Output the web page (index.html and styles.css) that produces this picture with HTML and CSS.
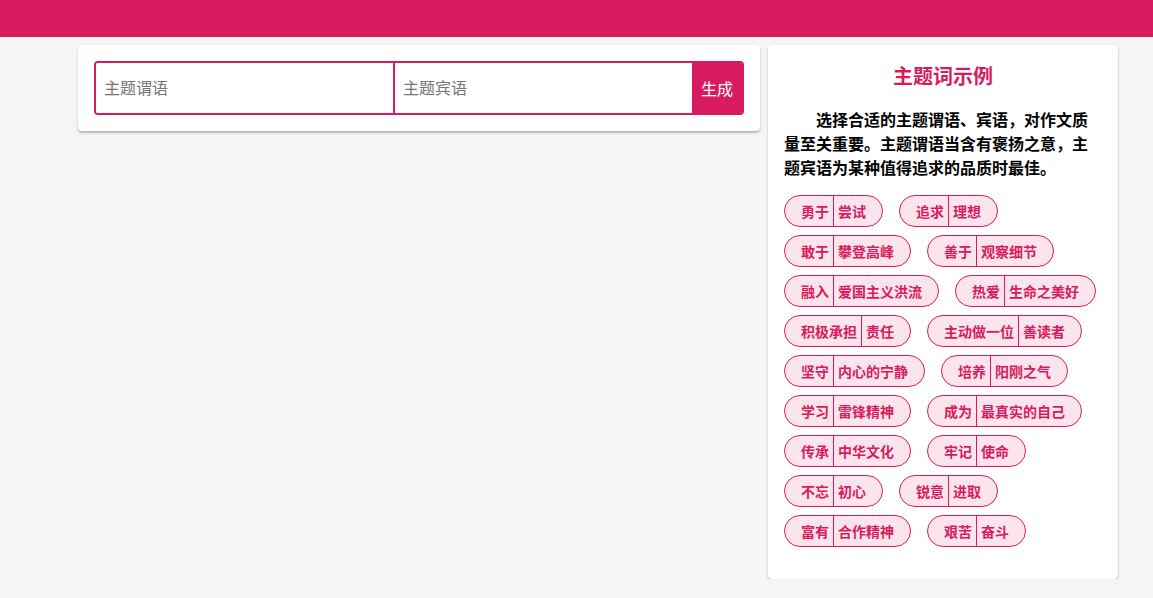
FILE: index.html
```html
<!DOCTYPE html>
<html lang="zh-CN">
<head>
<meta charset="UTF-8" />
<meta name="viewport" content="width=device-width, initial-scale=1.0" />
<title>主题词生成</title>
<link rel="stylesheet" href="styles.css">
</head>
<body>
<header class="topbar"></header>

<div class="page">
  <div class="card main-card">
    <form class="input-group" onsubmit="return false;">
      <input type="text" class="word-input" placeholder="主题谓语" />
      <input type="text" class="word-input" placeholder="主题宾语" />
      <button type="button" class="gen-btn">生成</button>
    </form>
  </div>

  <div class="card side-card">
    <h3 class="side-title">主题词示例</h3>
    <p class="side-intro">选择合适的主题谓语、宾语，对作文质量至关重要。主题谓语当含有褒扬之意，主题宾语为某种值得追求的品质时最佳。</p>
    <div class="tag-list">
      <span class="tag"><span class="verb">勇于</span><span class="obj">尝试</span></span>
      <span class="tag"><span class="verb">追求</span><span class="obj">理想</span></span>
      <span class="tag"><span class="verb">敢于</span><span class="obj">攀登高峰</span></span>
      <span class="tag"><span class="verb">善于</span><span class="obj">观察细节</span></span>
      <span class="tag"><span class="verb">融入</span><span class="obj">爱国主义洪流</span></span>
      <span class="tag"><span class="verb">热爱</span><span class="obj">生命之美好</span></span>
      <span class="tag"><span class="verb">积极承担</span><span class="obj">责任</span></span>
      <span class="tag"><span class="verb">主动做一位</span><span class="obj">善读者</span></span>
      <span class="tag"><span class="verb">坚守</span><span class="obj">内心的宁静</span></span>
      <span class="tag"><span class="verb">培养</span><span class="obj">阳刚之气</span></span>
      <span class="tag"><span class="verb">学习</span><span class="obj">雷锋精神</span></span>
      <span class="tag"><span class="verb">成为</span><span class="obj">最真实的自己</span></span>
      <span class="tag"><span class="verb">传承</span><span class="obj">中华文化</span></span>
      <span class="tag"><span class="verb">牢记</span><span class="obj">使命</span></span>
      <span class="tag"><span class="verb">不忘</span><span class="obj">初心</span></span>
      <span class="tag"><span class="verb">锐意</span><span class="obj">进取</span></span>
      <span class="tag"><span class="verb">富有</span><span class="obj">合作精神</span></span>
      <span class="tag"><span class="verb">艰苦</span><span class="obj">奋斗</span></span>
    </div>
  </div>
</div>
</body>
</html>
```

FILE: styles.css
```css
body {
  margin: 0;
  background: #f5f5f5;
  font-family: "Noto Sans CJK SC", "Noto Sans", sans-serif;
  color: #000;
}
.topbar {
  height: 37px;
  background: #d81b60;
}
.page {
  display: flex;
  align-items: flex-start;
  gap: 8px;
  padding: 8px 0 0 78px;
}
.card {
  background: #fff;
  border-radius: 4px;
  box-shadow: 0 2px 2px rgba(0,0,0,0.24), 0 0 2px rgba(0,0,0,0.08);
  padding: 16px;
  box-sizing: border-box;
}
.main-card {
  width: 682px;
}
.input-group {
  display: flex;
  height: 54px;
  border: 2px solid #d81b60;
  border-radius: 4px;
  box-sizing: border-box;
  overflow: hidden;
}
.word-input {
  flex: 1;
  min-width: 0;
  border: none;
  outline: none;
  padding: 0 8px 3px;
  font-family: inherit;
  font-size: 16px;
  color: #333;
}
.word-input + .word-input {
  border-left: 2px solid #d81b60;
}
.word-input::placeholder {
  color: #757575;
}
.gen-btn {
  width: 50px;
  border: none;
  background: #d81b60;
  color: #fff;
  font-family: inherit;
  font-size: 16px;
  padding: 0;
  cursor: pointer;
}
.side-card {
  width: 350px;
  padding-bottom: 32px;
}
.side-title {
  margin: 0;
  text-align: center;
  color: #d81b60;
  font-size: 20px;
  line-height: 30px;
  font-weight: bold;
}
.side-intro {
  margin: 16px 0 16px;
  font-size: 16px;
  line-height: 24px;
  font-weight: bold;
  text-indent: 2em;
}
.tag-list {
  display: flex;
  flex-wrap: wrap;
  column-gap: 16px;
  row-gap: 8px;
}
.tag {
  display: inline-flex;
  height: 32px;
  box-sizing: border-box;
  border: 1px solid #d81b60;
  border-radius: 16px;
  background: #fce4ec;
  color: #d81b60;
  font-size: 14px;
  font-weight: bold;
  line-height: 30px;
}
.verb {
  padding: 0 4px 0 16px;
  border-right: 1px solid #d81b60;
}
.obj {
  padding: 0 16px 0 4px;
}
```
